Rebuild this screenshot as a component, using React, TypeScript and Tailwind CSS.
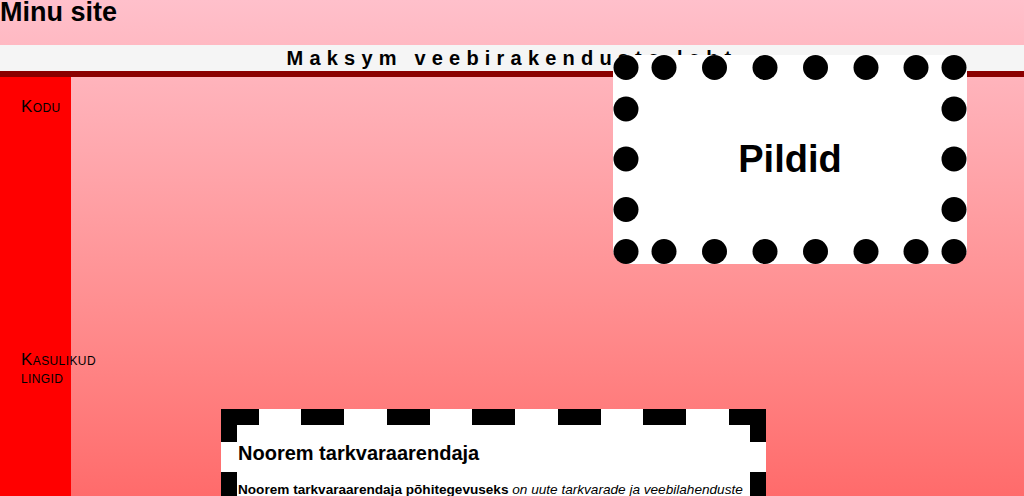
// dot centres for the "Pildid" frame (box is 354 x 209)
const topXs = [13, 51, 101.5, 152, 202.5, 253, 303, 341]
const sideYs = [54, 104, 154.5]

export default function App() {
  return (
    <div className="relative min-h-screen bg-fixed bg-linear-to-b from-[#ffc0cb] to-[#ff6b6b] font-['Liberation_Sans',Arial,sans-serif] text-black">
      {/* Site title */}
      <header className="h-[45px]">
        <h1 className="text-[27px] font-bold leading-[24px]">Minu site</h1>
      </header>

      {/* Top nav bar */}
      <nav className="bg-[#f5f5f5] border-b-[6px] border-[#8b0000] text-center text-[20px] font-bold tracking-[6.2px] leading-[26px]">
        Maksym veebirakenduste leht
      </nav>

      <div className="flex">
        {/* Sidebar */}
        <aside className="w-[71px] shrink-0 bg-[#ff0000] pl-[21px] pt-[21px] text-[17px] leading-[18px] tracking-[0.4px] [font-variant:small-caps]">
          <ul>
            <li>Kodu</li>
            <li className="mt-[235px]">Kasulikud lingid</li>
          </ul>
        </aside>

        {/* Main content */}
        <main className="flex-1 pb-10">
          <section className="ml-[150px] mt-[332px] w-[545px] p-[16px] pl-[17px] pb-8 [background:repeating-linear-gradient(90deg,#000_-5px_38px,transparent_38px_80.5px)_top/100%_16px_no-repeat,repeating-linear-gradient(90deg,#000_-5px_38px,transparent_38px_80.5px)_bottom/100%_16px_no-repeat,repeating-linear-gradient(180deg,#000_0_33px,transparent_33px_63px)_left/16px_100%_no-repeat,repeating-linear-gradient(180deg,#000_0_33px,transparent_33px_63px)_right/16px_100%_no-repeat,#fff]">
            <h2 className="mt-[17px] text-[20px] font-bold leading-[23px]">Noorem tarkvaraarendaja</h2>
            <p className="mt-[17px] text-[13.6px] leading-[16px]">
              <b>Noorem tarkvaraarendaja põhitegevuseks</b>{" "}
              <i>on uute tarkvarade ja veebilahenduste arendamine, testimine ning olemasolevate süsteemide hooldamine koostöös vanemate arendajatega.</i>
            </p>
          </section>
        </main>
      </div>

      {/* Pictures box over the header */}
      <div className="absolute left-[613px] top-[55px] flex h-[209px] w-[354px] items-center justify-center rounded-[15px] bg-white">
        <svg className="absolute inset-0" width="354" height="209" viewBox="0 0 354 209" fill="black">
          {topXs.map((x) => (
            <g key={x}>
              <circle cx={x} cy={12.5} r={12.5} />
              <circle cx={x} cy={196.5} r={12.5} />
            </g>
          ))}
          {sideYs.map((y) => (
            <g key={y}>
              <circle cx={13} cy={y} r={12.5} />
              <circle cx={341} cy={y} r={12.5} />
            </g>
          ))}
        </svg>
        <span className="relative text-[38px] font-bold">Pildid</span>
      </div>
    </div>
  )
}
